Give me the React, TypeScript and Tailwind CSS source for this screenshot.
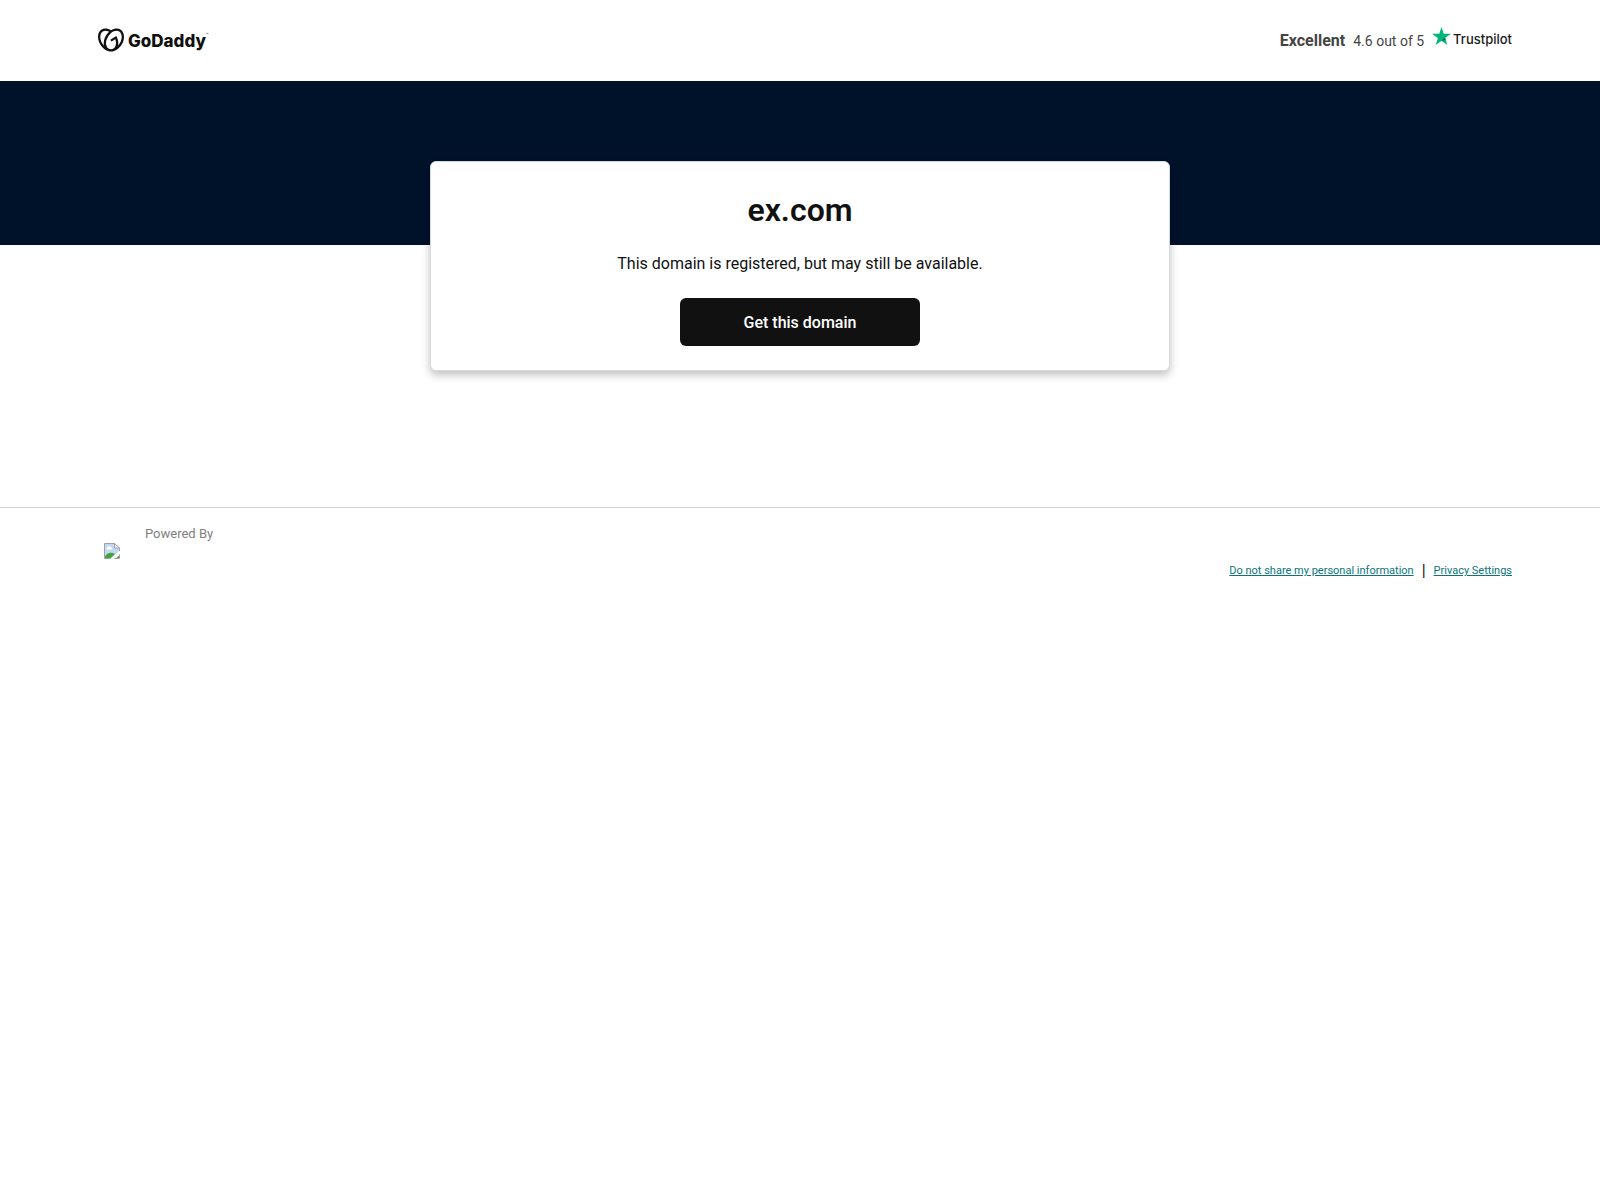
import React from "react";
import { SiGodaddy } from "react-icons/si";

function Logo() {
  return (
    <a href="#home" aria-label="GoDaddy" className="flex items-center gap-1 text-[#111111]">
      <SiGodaddy className="mb-0.5 size-[26px]" aria-hidden="true" />
      <span className="flex items-start font-['Inter'] text-[17px] leading-6 font-extrabold">
        GoDaddy
        <span className="text-[4px] leading-3 font-normal">™</span>
      </span>
    </a>
  );
}

function TrustpilotMark() {
  return (
    <span className="flex items-center pb-1 text-[#191919]">
      <svg viewBox="0 0 20 19" className="mb-1.5 h-[18px] w-[19px]" aria-hidden="true">
        <path fill="#00b67a" d="M20 7.25h-7.64L10 0 7.64 7.25H0l6.18 4.48L3.82 19 10 14.51 16.18 19l-2.36-7.27z" />
        <path fill="#005128" d="m14.35 13.37-.53-1.64L10 14.51z" />
      </svg>
      <span className="ml-0.5 font-['Inter'] text-[13px] leading-5 font-medium">Trustpilot</span>
    </span>
  );
}

function BrokenImage() {
  return (
    <svg viewBox="0 0 16 16" className="size-4" role="img" aria-label="Unavailable image">
      <path fill="#c3d6f4" d="M.5.5h10l5 4.5v4L6 15.5H.5z" />
      <path fill="#fff" d="M3 6.5c-1-.2-1-1.8.3-2C3.700 2.800 6.200 2.800 6.700 4.300 8.200 4.200 8.600 6.300 7.200 6.500z" />
      <path fill="#42a533" d="M1 15.500v-2c2-3.700 6-5 10-2.500L6.500 15.500zM11.500 15.500l3.500-3v3z" />
      <path fill="#fff" d="M16 7.500v3L10.500 16H6z" />
      <path fill="#f4f4f4" d="M10.500.5V5h5z" />
      <path fill="none" stroke="#a0a0a0" d="M6.500 15.500h-6V.5h10l5 4.500v3M10.500.5V5h5M10.500 15.500h5v-4" />
    </svg>
  );
}

export default function App() {
  return (
    <div className="min-h-screen bg-white font-['Roboto',sans-serif] text-[#111111]">
      <header className="flex h-[81px] items-center justify-between pr-[88px] pl-[98px]">
        <Logo />
        <div className="flex items-center gap-2 text-[#444444]">
          <strong className="text-base leading-6 font-bold">Excellent</strong>
          <span className="text-sm leading-6">4.6 out of 5</span>
          <TrustpilotMark />
        </div>
      </header>

      <main className="bg-linear-to-b from-[#00112a] from-[164px] to-white to-[164px] pt-20 pb-[136px]">
        <section className="mx-auto flex w-full max-w-[740px] flex-col items-center rounded-md border border-[#d4dbe0] bg-white px-6 pt-7 pb-6 shadow-[0_4px_8px_rgba(0,0,0,0.25)]">
          <h1 className="text-[32px] leading-10 font-semibold">ex.com</h1>
          <p className="mt-5 pt-0.5 text-base leading-6">This domain is registered, but may still be available.</p>
          <button type="button" className="mt-[22px] h-12 w-60 rounded-md bg-[#111111] pt-0.5 text-base font-medium text-white">
            Get this domain
          </button>
        </section>
      </main>

      <footer className="flex justify-between border-t border-[#d3d3d3] pt-[15px] pr-[88px] pl-[104px]">
        <div className="flex items-start gap-[25px]">
          <div className="pt-5">
            <BrokenImage />
          </div>
          <span className="text-[13px] leading-[22px] text-[#808080]">Powered By</span>
        </div>
        <nav className="flex items-center gap-2 pt-9 text-[11px] leading-6 text-[#09757a]">
          <a href="#do-not-share" className="underline">Do not share my personal information</a>
          <span className="text-base text-[#111111]">|</span>
          <a href="#privacy" className="underline">Privacy Settings</a>
        </nav>
      </footer>
    </div>
  );
}
